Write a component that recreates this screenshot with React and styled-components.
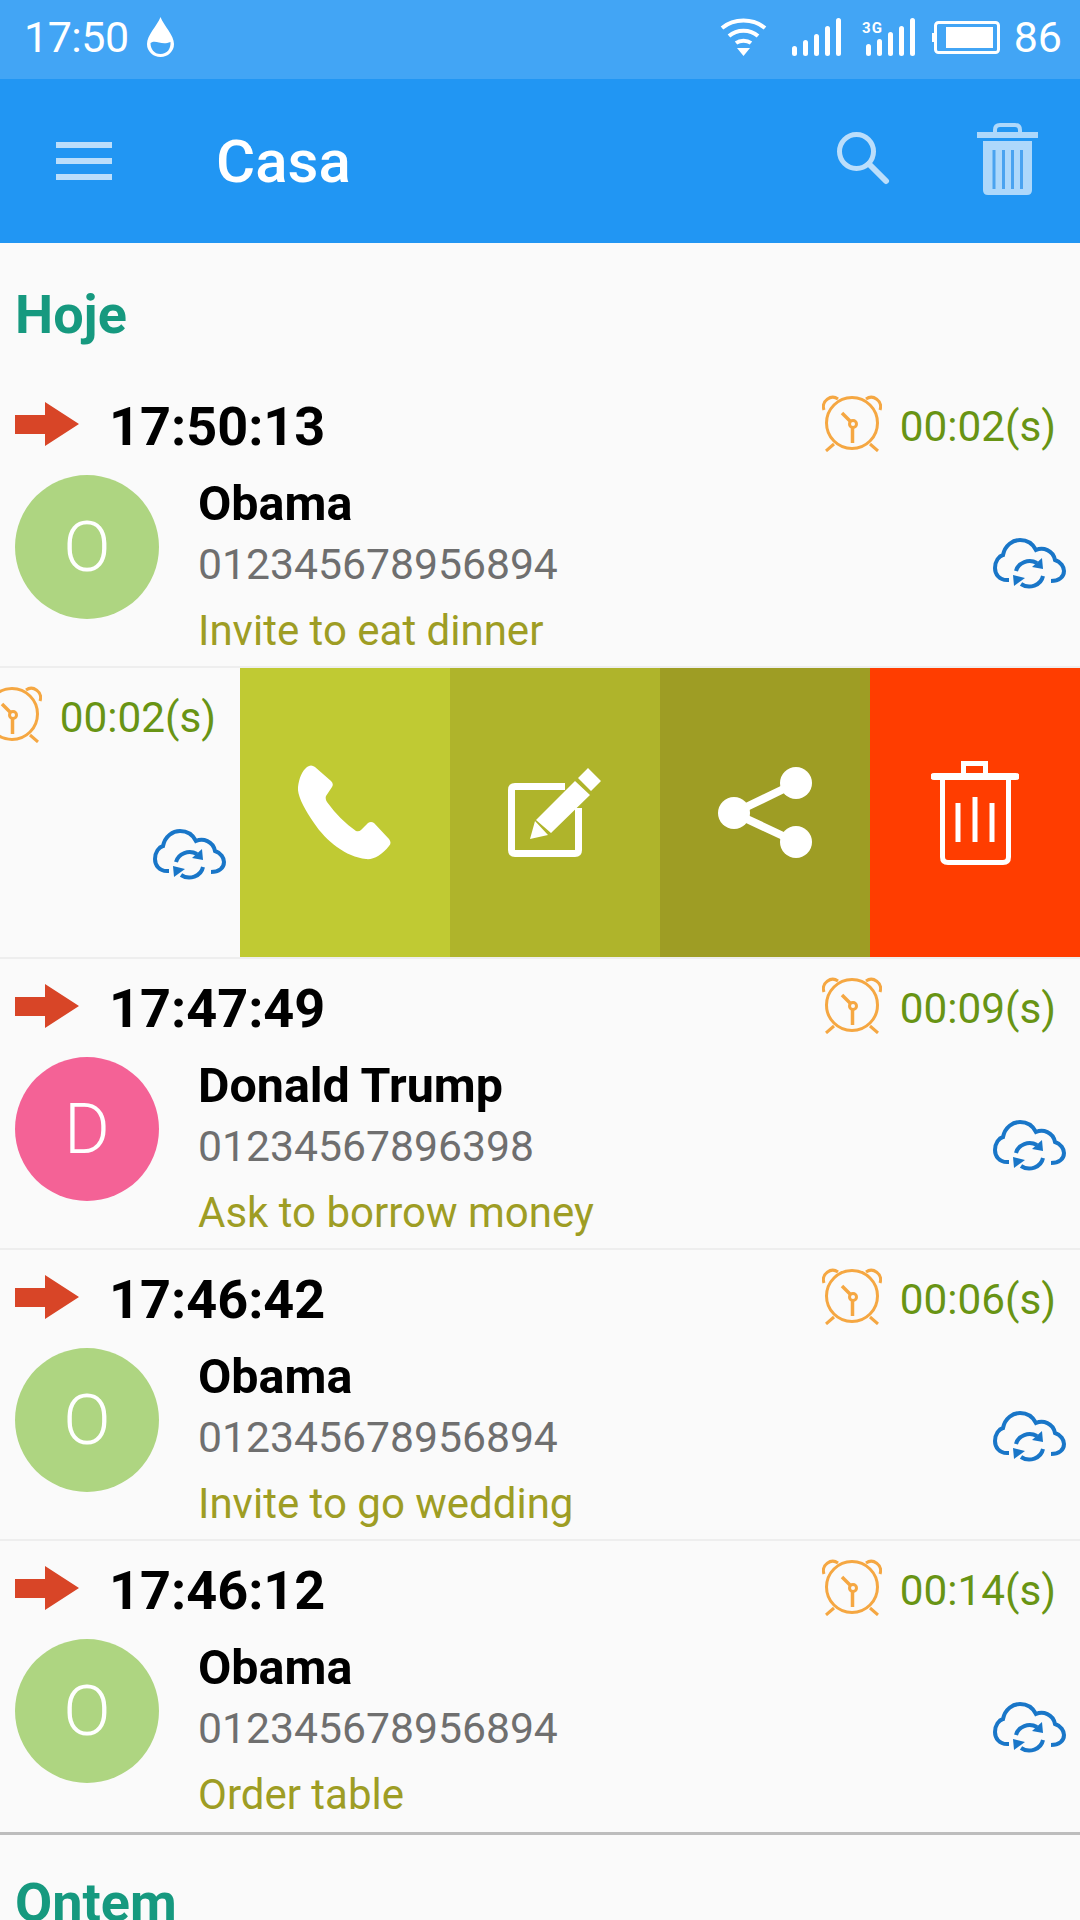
import React from 'react'
import styled, { createGlobalStyle } from 'styled-components'

const GlobalStyle = createGlobalStyle`
  html, body {
    margin: 0;
    padding: 0;
    background: #fafafa;
  }

  body {
    font-family: Roboto, "Liberation Sans", sans-serif;
  }
`

const Screen = styled.div`
  width: 1080px;
  height: 1920px;
  overflow: hidden;
  background: #fafafa;
`

const StatusBar = styled.div`
  height: 79px;
  background: #42a5f5;
  color: #fff;
  display: flex;
  align-items: center;
  padding: 0 18px 5px 24px;
  box-sizing: border-box;
  font-size: 43px;
  font-weight: 400;

  .clock {
    margin-right: 18px;
    letter-spacing: -0.5px;
  }

  .spacer {
    flex: 1;
  }

  .wifi {
    margin-right: 25px;
  }

  .signal {
    margin-right: 21px;
  }

  .signal-3g {
    margin-right: 17px;
  }

  .level {
    margin-left: 14px;
  }
`

const AppBar = styled.div`
  height: 164px;
  background: #2196f3;
  display: flex;
  align-items: center;
  padding: 0 42px 0 56px;

  .title {
    margin-left: 104px;
    color: #fff;
    font-size: 60px;
    font-weight: 500;
    flex: 1;
  }

  .search {
    margin: -6px 87px 0 0;
  }

  .trash {
    margin-top: -4px;
  }
`

const SectionTitle = styled.div`
  height: ${p => p.$height}px;
  box-sizing: border-box;
  padding: ${p => p.$top}px 15px 0;
  color: #16997f;
  font-size: 54px;
  font-weight: 700;
  line-height: 60px;
`

const RowBox = styled.div`
  height: 291px;
  box-sizing: border-box;
  border-bottom: 2px solid ${p => (p.$last ? 'transparent' : '#eeeeee')};
  display: flex;
  overflow: hidden;
`

const RowContent = styled.div`
  flex: none;
  width: 1080px;
  box-sizing: border-box;
  padding: 19px 15px 0;
  margin-left: ${p => (p.$swiped ? '-840px' : '0')};
`

const TopLine = styled.div`
  height: 60px;
  display: flex;
  align-items: center;

  .arrow {
    margin-top: -5px;
  }

  .alarm {
    margin-top: -5px;
  }

  .time {
    margin-left: 30px;
    flex: 1;
    color: #000;
    font-size: 54px;
    font-weight: 700;
  }

  .duration {
    margin: 0 9px 0 18px;
    color: #689414;
    font-size: 42.3px;
  }
`

const Body = styled.div`
  margin-top: 19px;
  display: flex;
  align-items: flex-start;

  .cloud {
    margin: 63px -1px 0 auto;
  }
`

const Avatar = styled.div`
  flex: none;
  width: 144px;
  height: 144px;
  border-radius: 50%;
  background: ${p => p.$color};
  color: #fff;
  display: flex;
  align-items: center;
  justify-content: center;
  font-size: 70px;
  font-weight: 300;
`

const Details = styled.div`
  margin-left: 39px;
`

const Name = styled.div`
  height: 58px;
  line-height: 58px;
  color: #000;
  font-size: 48.4px;
  font-weight: 700;
`

const Phone = styled.div`
  height: 62px;
  line-height: 62px;
  color: #6f6f6f;
  font-size: 42.7px;
`

const Note = styled.div`
  height: 71px;
  line-height: 72px;
  color: #9e9d24;
  font-size: 42px;
`

const Actions = styled.div`
  flex: none;
  width: 840px;
  display: flex;
`

const Action = styled.div`
  width: 210px;
  background: ${p => p.$color};
  display: flex;
  align-items: center;
  justify-content: center;
`

const BottomRule = styled.div`
  height: 3px;
  background: #bdbdbd;
`

const Drop = () => (
  <svg width="27" height="40" viewBox="0 0 27 40">
    <path d="M13.5 0 C17 9 27 18 27 27 A13.5 13 0 0 1 0 27 C0 18 10 9 13.5 0Z" fill="#fff" />
    <path d="M3.5 26 C9 22 14 29 23.5 25 C24 32 20 37 13.5 37 C7 37 3.5 32 3.5 26Z" fill="#42a5f5" />
  </svg>
)

const Wifi = () => (
  <svg className="wifi" width="47" height="38" viewBox="0 0 47 38" fill="none" stroke="#fff" strokeWidth="4">
    <path d="M2 10 C14 0 33 0 45 10" />
    <path d="M9 18 C17 11 30 11 38 18" />
    <path d="M16 25 C20 22 27 22 31 25" />
    <path d="M17 30 H30 L23.5 38Z" fill="#fff" stroke="none" />
  </svg>
)

const Signal = () => (
  <svg className="signal" width="49" height="38" viewBox="0 0 49 38" fill="#fff">
    <rect x="0" y="28" width="5" height="10" rx="2.5" />
    <rect x="11" y="22" width="5" height="16" rx="2.5" />
    <rect x="22" y="16" width="5" height="22" rx="2.5" />
    <rect x="33" y="8" width="5" height="30" rx="2.5" />
    <rect x="44" y="0" width="5" height="38" rx="2.5" />
  </svg>
)

const Signal3g = () => (
  <svg className="signal-3g" width="53" height="38" viewBox="0 0 53 38" fill="#fff">
    <text x="0" y="15" fontFamily="Roboto, sans-serif" fontSize="15" fontWeight="700" textLength="20">3G</text>
    <rect x="4" y="26" width="5" height="12" rx="2.5" />
    <rect x="15" y="21" width="5" height="17" rx="2.5" />
    <rect x="26" y="14" width="5" height="24" rx="2.5" />
    <rect x="37" y="8" width="5" height="30" rx="2.5" />
    <rect x="48" y="0" width="5" height="38" rx="2.5" />
  </svg>
)

const Battery = () => (
  <svg width="68" height="33" viewBox="0 0 68 33">
    <rect x="3.5" y="1.5" width="63" height="30" rx="3" fill="none" stroke="#fff" strokeWidth="3" />
    <rect x="0" y="12" width="2" height="9" fill="#fff" />
    <rect x="14" y="6" width="47" height="21" fill="#fff" />
  </svg>
)

const Menu = () => (
  <svg width="56" height="38" viewBox="0 0 56 38" fill="#bbdefb">
    <rect y="0" width="56" height="6" />
    <rect y="16" width="56" height="6" />
    <rect y="32" width="56" height="6" />
  </svg>
)

const Search = () => (
  <svg className="search" width="53" height="53" viewBox="0 0 53 53" fill="none" stroke="#bbdefb" strokeWidth="5">
    <circle cx="19.5" cy="19.5" r="17" />
    <path d="M32 32 L49 49" strokeWidth="6" strokeLinecap="round" />
  </svg>
)

const BarTrash = () => (
  <svg className="trash" width="61" height="72" viewBox="0 0 61 72">
    <path d="M16 9 V7 Q16 0 23 0 H38 Q45 0 45 7 V9 H41 V7 Q41 4 38 4 H23 Q20 4 20 7 V9Z M0 9 H61 V15 H0Z" fill="#add8fb" />
    <path d="M6 18 H55 V67 Q55 72 50 72 H11 Q6 72 6 67Z" fill="#add8fb" />
    <path d="M17 27 V66 M26.5 27 V66 M35.5 27 V66 M44.5 27 V66" stroke="#4aa3f0" strokeWidth="3" />
  </svg>
)

const Arrow = () => (
  <svg className="arrow" width="64" height="44" viewBox="0 0 64 44">
    <path d="M0 13 H30 V0 L64 22 L30 44 V32 H0Z" fill="#d84527" />
  </svg>
)

const Alarm = () => (
  <svg className="alarm" width="60" height="57" viewBox="0 0 60 57" fill="none" stroke="#f5a742" strokeWidth="3">
    <circle cx="30" cy="28" r="25.5" />
    <path d="M2 15 C-1 6 9 -1 16 4" />
    <path d="M44 4 C51 -1 61 6 58 15" />
    <path d="M4 56 L12 49 M56 56 L48 49" />
    <circle cx="31" cy="29" r="3.5" />
    <path d="M29 27 L20 18 M30.5 33 V48" strokeWidth="3.5" />
  </svg>
)

const Cloud = () => (
  <svg className="cloud" width="73" height="53" viewBox="0 0 73 53" fill="none" stroke="#1976c8" strokeWidth="4">
    <path d="M16 42 H14 C6 42 2 36 2 30 C2 23 6 18 10 17 C12 7 20 2 27 2 C34 2 40 6 43 12 C50 9 60 12 62 22 C68 24 71 29 71 33 C71 39 66 43 58 43" />
    <path d="M23 33 A14 13 0 0 1 44 25" />
    <path d="M50 38 A14 13 0 0 1 28 46" />
    <path d="M49 20 L50 31 L39 29Z" fill="#1976c8" stroke="none" />
    <path d="M21 48 L20 37 L32 40Z" fill="#1976c8" stroke="none" />
  </svg>
)

const CallIcon = () => (
  <svg width="94" height="95" viewBox="0 0 94 95">
    <path d="M9 2 Q13 -1 17 2 L33 16 Q36 19 34 22 L28 31 Q27 34 29 37 Q42 55 58 66 Q61 67 63 65 L70 58 Q73 56 76 58 L91 74 Q94 78 91 81 C84 90 75 95 68 94 C48 92 28 76 16 58 C6 44 -1 30 0 22 C1 13 4 6 9 2Z" fill="#fff" />
  </svg>
)

const EditIcon = () => (
  <svg width="94" height="89" viewBox="0 0 94 89">
    <path d="M57 18.5 H7 Q3.5 18.5 3.5 22 V82 Q3.5 85.5 7 85.5 H67 Q70.5 85.5 70.5 82 V40" fill="none" stroke="#fff" strokeWidth="7" />
    <path d="M22 71 L27 53 L40 67Z M28 52 L67 13 L82 27 L43 65Z M70 10 L80 0 L93 13 L83 23Z" fill="#fff" />
  </svg>
)

const ShareIcon = () => (
  <svg width="94" height="91" viewBox="0 0 94 91" fill="#fff">
    <path d="M78 16 L16 46 L78 75" fill="none" stroke="#fff" strokeWidth="8" />
    <circle cx="78" cy="16" r="16" />
    <circle cx="16" cy="46" r="16" />
    <circle cx="78" cy="75" r="16" />
  </svg>
)

const DeleteIcon = () => (
  <svg width="88" height="104" viewBox="0 0 88 104" fill="none" stroke="#fff" strokeWidth="5">
    <path d="M32.5 14 V2.5 H54.5 V14" />
    <path d="M3 15.5 H85" strokeWidth="7" strokeLinecap="round" />
    <path d="M11.5 19 V96 Q11.5 101.5 17 101.5 H72 Q77.5 101.5 77.5 96 V19" />
    <path d="M27 42 V81 M44 36 V81 M61 42 V81" />
  </svg>
)

const calls = [
  { time: '17:50:13', duration: '00:02(s)', name: 'Obama', phone: '012345678956894', note: 'Invite to eat dinner' },
  { time: '17:50:13', duration: '00:02(s)', name: 'Obama', phone: '012345678956894', note: 'Invite to eat dinner', swiped: true },
  { time: '17:47:49', duration: '00:09(s)', name: 'Donald Trump', phone: '01234567896398', note: 'Ask to borrow money' },
  { time: '17:46:42', duration: '00:06(s)', name: 'Obama', phone: '012345678956894', note: 'Invite to go wedding' },
  { time: '17:46:12', duration: '00:14(s)', name: 'Obama', phone: '012345678956894', note: 'Order table' }
]

const avatarColors = {
  O: '#aed581',
  D: '#f46296'
}

const CallRow = ({ call, last }) => {
  const letter = call.name[0]

  return (
    <RowBox $last={last}>
      <RowContent $swiped={call.swiped}>
        <TopLine>
          <Arrow />
          <span className="time">{call.time}</span>
          <Alarm />
          <span className="duration">{call.duration}</span>
        </TopLine>
        <Body>
          <Avatar $color={avatarColors[letter]}>{letter}</Avatar>
          <Details>
            <Name>{call.name}</Name>
            <Phone>{call.phone}</Phone>
            <Note>{call.note}</Note>
          </Details>
          <Cloud />
        </Body>
      </RowContent>
      {call.swiped && (
        <Actions>
          <Action $color="#c0ca33"><CallIcon /></Action>
          <Action $color="#afb42b"><EditIcon /></Action>
          <Action $color="#9e9d24"><ShareIcon /></Action>
          <Action $color="#ff3d00"><DeleteIcon /></Action>
        </Actions>
      )}
    </RowBox>
  )
}

const App = () => {
  return (
    <Screen>
      <GlobalStyle />
      <StatusBar>
        <span className="clock">17:50</span>
        <Drop />
        <span className="spacer" />
        <Wifi />
        <Signal />
        <Signal3g />
        <Battery />
        <span className="level">86</span>
      </StatusBar>
      <AppBar>
        <Menu />
        <span className="title">Casa</span>
        <Search />
        <BarTrash />
      </AppBar>
      <SectionTitle $height={134} $top={42}>Hoje</SectionTitle>
      {calls.map((call, i) => (
        <CallRow key={i} call={call} last={i === calls.length - 1} />
      ))}
      <BottomRule />
      <SectionTitle $height={134} $top={38}>Ontem</SectionTitle>
    </Screen>
  )
}

export default App
